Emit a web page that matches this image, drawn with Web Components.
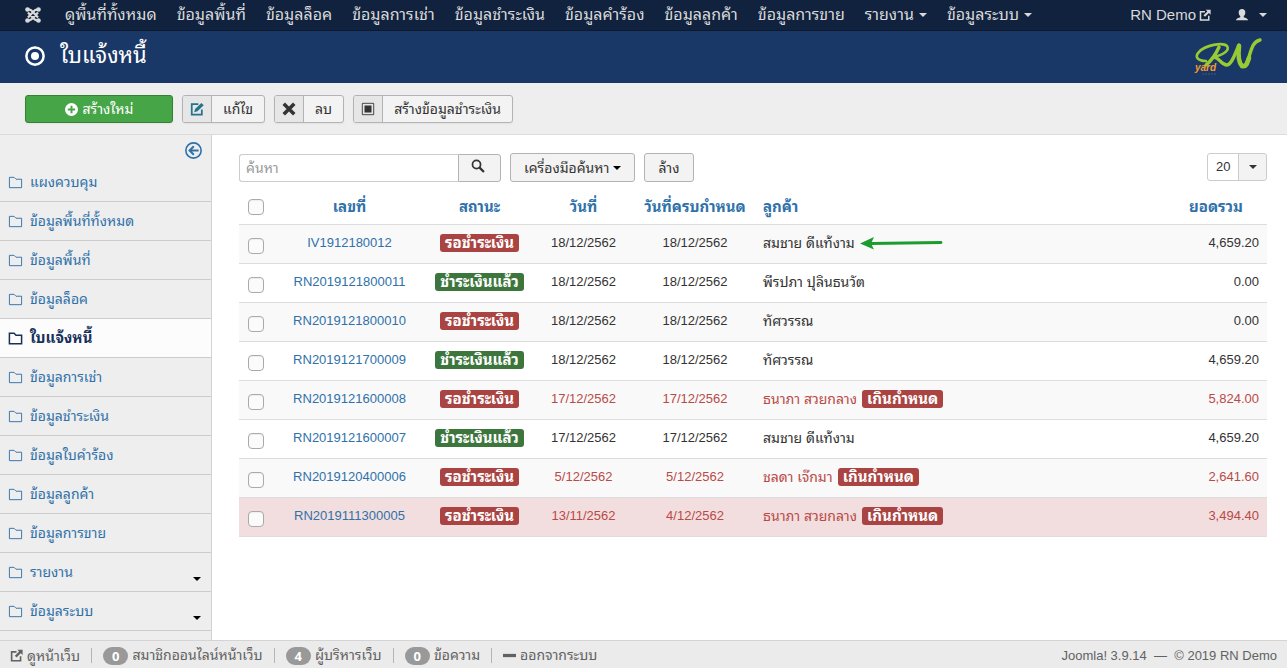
<!DOCTYPE html>
<html lang="th">
<head>
<meta charset="utf-8">
<meta name="viewport" content="width=device-width, initial-scale=1">
<title>ใบแจ้งหนี้ - RN Demo</title>
<style>
  html, body { margin: 0; height: 100%; }
  body {
    font: 13px/18px "Liberation Sans", "Noto Sans Thai Looped", "Noto Looped Thai", "Loma", "Waree", "Noto Sans", sans-serif;
    color: #333; background: #fff;
    --link: #3071a9;
  }
</style>
</head>
<body>
<rn-app></rn-app>
<script>
const define = (name, markup, setup) => {
  const tpl = document.createElement('template');
  tpl.innerHTML = markup;
  customElements.define(name, class extends HTMLElement {
    constructor() {
      super();
      this.attachShadow({ mode: 'open' }).append(tpl.content.cloneNode(true));
    }
    connectedCallback() { if (setup) setup(this, this.shadowRoot); }
  });
};

/* Icons share one 16-unit grid and take their colour from the text. */
const ICONS = {
  joomla: '<g fill="none" stroke="currentColor" stroke-width="2.300"><path d="M3 3c2-1 3 0 4.500 1.500L13 10.500M13 3c-2-1-3 0-4.500 1.500L3 10.500M13 13c-2 1-3 0-4.500-1.500L3 5.500M3 13c2 1 3 0 4.500-1.500L13 5.500"/></g><g fill="currentColor"><circle cx="2.500" cy="2.500" r="2.300"/><circle cx="13.500" cy="2.500" r="2.300"/><circle cx="2.500" cy="13.500" r="2.300"/><circle cx="13.500" cy="13.500" r="2.300"/></g>',
  target: '<circle cx="8" cy="8" r="6.900" fill="none" stroke="currentColor" stroke-width="2"/><circle cx="8" cy="8" r="3.200" fill="currentColor"/>',
  plus: '<path fill="currentColor" fill-rule="evenodd" d="M8 0a8 8 0 1 0 0 16A8 8 0 0 0 8 0zM6.800 3.500h2.400v3.300h3.300v2.400H9.200v3.300H6.800V9.200H3.500V6.800h3.300z"/>',
  edit: '<path fill="none" stroke="currentColor" stroke-width="2" d="M9.500 2.500H2v12h11.500V8.500"/><path fill="currentColor" d="M13 1l2.700 2.700-7.200 7-3.700 1 1-3.700z"/>',
  cross: '<path stroke="currentColor" stroke-width="4" d="M2 2l12 12M14 2L2 14"/>',
  box: '<path fill="none" stroke="currentColor" d="M1.500 1.500h13v13h-13z"/><path fill="currentColor" d="M4 4h8v8H4z"/>',
  external: '<path fill="none" stroke="currentColor" stroke-width="2" d="M8 3.500H2v11h11V9"/><path fill="currentColor" d="M9 1h6.500v6.500l-2.300-2.300-5.200 5.200-2-2 5.200-5.200z"/>',
  user: '<path fill="currentColor" d="M8 1c2.400 0 3.800 1.700 3.800 4 0 1.900-.9 3.300-1.800 4.200v1.300c1.800.4 4.800 1.500 5 3.500H1c.2-2 3.200-3.100 5-3.500V9.200C5.100 8.300 4.200 6.900 4.200 5c0-2.300 1.400-4 3.800-4z"/>',
  caret: '<path fill="currentColor" d="M0 4h16l-8 8z"/>',
  back: '<circle cx="8" cy="8" r="7.200" fill="none" stroke="currentColor" stroke-width="1.500"/><path fill="none" stroke="currentColor" stroke-width="1.900" d="M8.300 4L4.300 8l4 4M4.500 8h8.300"/>',
  folder: '<path fill="none" stroke="currentColor" stroke-width="var(--folder-line,1)" d="M1.500 2.500h5l2 2h6v9h-13z"/>',
  search: '<circle cx="6.300" cy="6.300" r="4.600" fill="none" stroke="currentColor" stroke-width="2"/><path stroke="currentColor" stroke-width="2.600" d="M9.800 9.800l5 5"/>',
  minus: '<path fill="currentColor" d="M0 6h16v4H0z"/>'
};
customElements.define('rn-icon', class extends HTMLElement {
  connectedCallback() {
    if (this.shadowRoot) return;
    this.attachShadow({ mode: 'open' }).innerHTML =
      `<style>:host{display:inline-block;flex:none;width:var(--size,14px);height:var(--size,14px)}svg{display:block;width:100%;height:100%}</style>
       <svg viewBox="0 0 16 16" aria-hidden="true">${ICONS[this.getAttribute('name')]}</svg>`;
  }
});

/* Main navigation */
const MENU = ['ดูพื้นที่ทั้งหมด', 'ข้อมูลพื้นที่', 'ข้อมูลล็อค', 'ข้อมูลการเช่า', 'ข้อมูลชำระเงิน', 'ข้อมูลคำร้อง', 'ข้อมูลลูกค้า', 'ข้อมูลการขาย', 'รายงาน', 'ข้อมูลระบบ'];
define('rn-navbar', `
<style>
  :host { display: block; background: #10223e; border-bottom: 1px solid #0d1a2e; font-size: 15px; line-height: 30px; }
  nav { display: flex; height: 30px; padding: 0 20px 0 25px; white-space: nowrap; }
  a { display: flex; align-items: center; color: #d9d9d9; text-decoration: none; }
  .brand { margin-right: 24px; --size: 16px; }
  .menu { display: flex; gap: 20px; flex: 1; font-size: 16px; }
  .menu a { gap: 5px; }
  .menu rn-icon, .user .arrow { --size: 8px; }
  .site { gap: 3px; --size: 12px; margin-right: 24px; }
  .user { gap: 10px; --size: 14px; }
</style>
<nav>
  <a class="brand" href="#" aria-label="Joomla"><rn-icon name="joomla"></rn-icon></a>
  <div class="menu"></div>
  <a class="site" href="#">RN Demo <rn-icon name="external"></rn-icon></a>
  <a class="user" href="#" aria-label="User menu"><rn-icon name="user"></rn-icon><rn-icon class="arrow" name="caret"></rn-icon></a>
</nav>`, (host, root) => {
  root.querySelector('.menu').innerHTML = MENU.map((t, i) =>
    `<a href="#">${t}${i > 7 ? '<rn-icon name="caret"></rn-icon>' : ''}</a>`).join('');
});

/* Page title and brand mark */
define('rn-header', `
<style>
  :host { display: flex; align-items: center; height: 52px; padding: 0 24px 0 25px; background: #1a3867; color: #fff; }
  h1 { display: flex; align-items: center; gap: 15px; flex: 1; margin: 0 0 2px; font-size: 22px; line-height: 36px; font-weight: 400; --size: 20px; }
  svg { width: 70px; height: 40px; }
</style>
<h1><rn-icon name="target"></rn-icon><slot></slot></h1>
<svg viewBox="0 0 70 40" role="img" aria-label="RN yard">
  <g fill="none" stroke="#97cb33" stroke-linecap="round" stroke-linejoin="round">
    <path stroke-width="2.600" d="M13 24C5 24 1 20 6 15C12 8 30 5 34 9C37 13 31 18 20 20"/>
    <path stroke-width="3.400" d="M26 10C23 17 19 23 13 28M21 20C27 21 28 28 34 28C39 28 43 14 46 8"/>
    <path stroke-width="4.600" d="M46 9C45 18 46 26 49 29C53 30 54 27 56 21"/>
    <path stroke-width="3.400" d="M52 29C58 20 57 5 67 3"/>
  </g>
  <text x="2" y="34" fill="#f59a30" font-family="Liberation Sans" font-size="10" font-weight="700" font-style="italic">yard</text>
  <path d="M9 37h15" stroke="#47597b" stroke-dasharray="2 1"/>
</svg>`);

/* Toolbar */
define('rn-tool-button', `
<style>
  :host { display: block; }
  button { display: flex; align-items: stretch; box-sizing: border-box; height: 28px; padding: 0; border: 1px solid #b3b3b3; border-radius: 3px; overflow: hidden;
    background: #f3f3f3; color: #333; font: inherit; font-size: 14px; line-height: 26px; box-shadow: 0 1px 2px rgba(0,0,0,.05); white-space: nowrap; }
  .icon { display: flex; align-items: center; justify-content: center; width: 28px; background: #e6e6e6; border-right: 1px solid #b3b3b3; --size: 14px; }
  .label { padding: 0 11px; }
  :host([primary]) button { width: 148px; justify-content: center; background: #46a546; border-color: #378137; color: #fff; }
  :host([primary]) .icon { width: auto; background: none; border: 0; --size: 13px; }
  :host([primary]) .label { padding: 0 0 0 5px; }
  :host([tone=blue]) .icon { color: #24748c; }
</style>
<button type="button"><span class="icon"></span><span class="label"><slot></slot></span></button>`, (host, root) => {
  root.querySelector('.icon').innerHTML = `<rn-icon name="${host.getAttribute('icon')}"></rn-icon>`;
});
define('rn-toolbar', `
<style>:host { display: flex; gap: 9px; padding: 12px 25px 11px; background: #eee; border-bottom: 1px solid #dcdcdc; }</style>
<slot></slot>`);

/* Side navigation */
const SIDE = ['แผงควบคุม', 'ข้อมูลพื้นที่ทั้งหมด', 'ข้อมูลพื้นที่', 'ข้อมูลล็อค', 'ใบแจ้งหนี้', 'ข้อมูลการเช่า', 'ข้อมูลชำระเงิน', 'ข้อมูลใบคำร้อง', 'ข้อมูลลูกค้า', 'ข้อมูลการขาย', 'รายงาน', 'ข้อมูลระบบ'];
define('rn-sidebar', `
<style>
  :host { display: block; box-sizing: border-box; background: #eee; border-right: 1px solid #d3d3d3; font-size: 14px; }
  .top { display: flex; justify-content: flex-end; height: 21px; padding: 7px 9px 0 0; }
  button { width: 17px; height: 17px; padding: 0; border: 0; background: none; color: var(--link); --size: 17px; }
  ul { margin: 0; padding: 0; list-style: none; }
  li { border-bottom: 1px solid #ccc; }
  a { display: flex; align-items: center; gap: 7px; height: 38px; padding: 0 10px 0 8px; color: var(--link); text-decoration: none; --size: 15px; }
  .current { background: #fcfcfc; }
  .current a { color: #17305a; font-size: 15px; font-weight: 700; --folder-line: 1.600; }
  .arrow { margin: 14px 0 0 auto; color: #000; --size: 8px; }
</style>
<div class="top"><button type="button" aria-label="Hide sidebar"><rn-icon name="back"></rn-icon></button></div>
<ul></ul>`, (host, root) => {
  root.querySelector('ul').innerHTML = SIDE.map((t, i) =>
    `<li${i === 4 ? ' class="current"' : ''}><a href="#"><rn-icon name="folder"></rn-icon>${t}${i > 9 ? '<rn-icon class="arrow" name="caret"></rn-icon>' : ''}</a></li>`).join('');
});

/* Filters */
define('rn-filters', `
<style>
  :host { display: flex; align-items: center; gap: 9px; height: 29px; font-size: 14px; }
  button, input, select { box-sizing: border-box; height: 29px; margin: 0; font: inherit; color: #333; }
  button { border: 1px solid #b3b3b3; border-radius: 3px; background: #f3f3f3; padding: 0 13px; white-space: nowrap; }
  .search { display: flex; align-self: flex-end; }
  .search input { width: 219px; height: 28px; padding: 0 6px; border: 1px solid #ccc; border-right: 0; border-radius: 3px 0 0 3px; background: #fff; }
  .search input::placeholder { color: #999; opacity: 1; }
  .search button { width: 43px; height: 28px; padding: 0 16px 0 12px; border-radius: 0 3px 3px 0; --size: 14px; }
  .tools { display: flex; align-items: center; gap: 4px; }
  .tools rn-icon { color: #000; --size: 8px; }
  .limit { display: grid; margin-left: auto; align-self: start; }
  .limit > * { grid-area: 1 / 1; }
  select { appearance: none; width: 60px; height: 28px; padding: 0 0 0 8px; border: 1px solid #ccc; border-radius: 3px; font-size: 13px;
    background: linear-gradient(90deg, #fff 30px, #ccc 30px, #ccc 31px, #f3f3f3 31px); }
  .limit rn-icon { place-self: center end; margin-right: 10px; pointer-events: none; --size: 8px; }
</style>
<div class="search"><input type="text" placeholder="ค้นหา" aria-label="ค้นหา"><button type="button" aria-label="ค้นหา"><rn-icon name="search"></rn-icon></button></div>
<button class="tools" type="button">เครื่องมือค้นหา<rn-icon name="caret"></rn-icon></button>
<button type="button">ล้าง</button>
<div class="limit"><select aria-label="Limit"><option>20</option></select><rn-icon name="caret"></rn-icon></div>`);

define('rn-badge', `
<style>
  :host { display: inline-block; padding: 0 5px; border-radius: 3px; background: #a94442; color: #fff; font-size: 15px; font-weight: 700; line-height: 18px; white-space: nowrap; }
  :host([paid]) { background: #3c763d; }
</style><slot></slot>`);

/* Invoice list */
const ROWS = [
  ['IV1912180012', 0, '18/12/2562', '18/12/2562', 'สมชาย ดีแท้งาม', '4,659.20', 'marked'],
  ['RN2019121800011', 1, '18/12/2562', '18/12/2562', 'พีรปภา ปุลินธนวัต', '0.00', ''],
  ['RN2019121800010', 0, '18/12/2562', '18/12/2562', 'ทัศวรรณ', '0.00', ''],
  ['RN2019121700009', 1, '18/12/2562', '18/12/2562', 'ทัศวรรณ', '4,659.20', ''],
  ['RN2019121600008', 0, '17/12/2562', '17/12/2562', 'ธนาภา สวยกลาง', '5,824.00', 'late'],
  ['RN2019121600007', 1, '17/12/2562', '17/12/2562', 'สมชาย ดีแท้งาม', '4,659.20', ''],
  ['RN2019120400006', 0, '5/12/2562', '5/12/2562', 'ชลดา เจ๊กมา', '2,641.60', 'late'],
  ['RN2019111300005', 0, '13/11/2562', '4/12/2562', 'ธนาภา สวยกลาง', '3,494.40', 'late error']
];
define('rn-invoices', `
<style>
  :host { display: block; }
  table { width: 100%; table-layout: fixed; border-collapse: separate; border-spacing: 0; }
  .c-check { width: 33px; } .c-number { width: 155px; } .c-status { width: 105px; } .c-date { width: 103px; } .c-due { width: 120px; } .c-total { width: 120px; }
  th, td { box-sizing: border-box; padding: 0 8px; border-bottom: 1px solid #ddd; text-align: center; white-space: nowrap; }
  th { height: 43px; padding-top: 8px; font-size: 15px; }
  td { height: 39px; padding-bottom: 2px; }
  a { color: var(--link); text-decoration: none; }
  .customer { text-align: left; }
  .total { text-align: right; }
  td.customer { font-size: 14px; }
  th.total { padding-right: 24px; }
  tbody tr:nth-child(odd) td { background: #f9f9f9; }
  tbody tr.error td { background: #f2dede; }
  .late td { color: #b94a48; }
  .check { padding: 0 0 0 9px; text-align: left; }
  td.check { padding-top: 4px; }
  th.check { padding-top: 8px; }
  input { display: block; appearance: none; box-sizing: border-box; width: 16px; height: 16px; margin: 0; border: 1px solid #aaa; border-radius: 4px; background: #fbfbfb; box-shadow: inset 0 1px 1px #eee; }
  .line { display: flex; align-items: center; gap: 5px; }
  .line svg { flex: none; width: 83px; height: 14px; }
</style>
<table>
  <colgroup><col class="c-check"><col class="c-number"><col class="c-status"><col class="c-date"><col class="c-due"><col><col class="c-total"></colgroup>
  <thead><tr>
    <th class="check"><input type="checkbox" aria-label="เลือกทั้งหมด"></th>
    <th><a href="#">เลขที่</a></th><th><a href="#">สถานะ</a></th><th><a href="#">วันที่</a></th><th><a href="#">วันที่ครบกำหนด</a></th>
    <th class="customer"><a href="#">ลูกค้า</a></th><th class="total"><a href="#">ยอดรวม</a></th>
  </tr></thead>
  <tbody></tbody>
</table>`, (host, root) => {
  const arrow = '<svg viewBox="0 0 83 14" aria-hidden="true"><path d="M11 7.500L81 6.500" stroke="#1c9c2e" stroke-width="2.800" stroke-linecap="round"/><path d="M0 7.500L14 1L11 7.500L14 13.500z" fill="#1c9c2e"/></svg>';
  root.querySelector('tbody').innerHTML = ROWS.map(([no, paid, date, due, name, total, state]) => `
    <tr class="${state}">
      <td class="check"><input type="checkbox" aria-label="${no}"></td>
      <td><a href="#">${no}</a></td>
      <td>${paid ? '<rn-badge paid>ชำระเงินแล้ว</rn-badge>' : '<rn-badge>รอชำระเงิน</rn-badge>'}</td>
      <td>${date}</td><td>${due}</td>
      <td class="customer"><div class="line"><span>${name}</span>${state.includes('late') ? '<rn-badge>เกินกำหนด</rn-badge>' : ''}${state === 'marked' ? arrow : ''}</div></td>
      <td class="total">${total}</td>
    </tr>`).join('');
});

/* Status bar */
define('rn-statusbar', `
<style>
  :host { display: flex; align-items: center; box-sizing: border-box; height: 28px; padding: 2px 10px 0; background: #ebebeb; border-top: 1px solid #d4d4d4; color: #626262; white-space: nowrap; }
  a { display: flex; align-items: center; gap: 4px; color: inherit; font-size: 14px; text-decoration: none; --size: 13px; }
  a + a { margin-left: 11px; padding-left: 11px; border-left: 1px solid #b5b5b5; line-height: 15px; }
  b { padding: 0 9px; border-radius: 9px; background: #999; color: #fff; font-family: "Open Sans", sans-serif; font-size: 13px; line-height: 18px; margin: -2px 0; }
  .copy { margin-left: auto; }
</style>
<a href="#"><rn-icon name="external"></rn-icon>ดูหน้าเว็บ</a>
<a href="#"><b>0</b>สมาชิกออนไลน์หน้าเว็บ</a>
<a href="#"><b>4</b>ผู้บริหารเว็บ</a>
<a href="#"><b>0</b>ข้อความ</a>
<a href="#"><rn-icon name="minus"></rn-icon>ออกจากระบบ</a>
<span class="copy">Joomla! 3.9.14 &nbsp;—&nbsp; © 2019 RN Demo</span>`);

define('rn-app', `
<style>
  :host { display: flex; flex-direction: column; min-height: 100%; }
  .body { display: grid; grid-template-columns: 212px minmax(0, 1fr); flex: 1; }
  main { padding: 18px 20px 20px 27px; }
  rn-statusbar { position: sticky; bottom: 0; }
</style>
<rn-navbar></rn-navbar>
<rn-header>ใบแจ้งหนี้</rn-header>
<rn-toolbar>
  <rn-tool-button primary icon="plus">สร้างใหม่</rn-tool-button>
  <rn-tool-button tone="blue" icon="edit">แก้ไข</rn-tool-button>
  <rn-tool-button icon="cross">ลบ</rn-tool-button>
  <rn-tool-button icon="box">สร้างข้อมูลชำระเงิน</rn-tool-button>
</rn-toolbar>
<div class="body">
  <rn-sidebar></rn-sidebar>
  <main><rn-filters></rn-filters><rn-invoices></rn-invoices></main>
</div>
<rn-statusbar></rn-statusbar>`);
</script>
</body>
</html>
